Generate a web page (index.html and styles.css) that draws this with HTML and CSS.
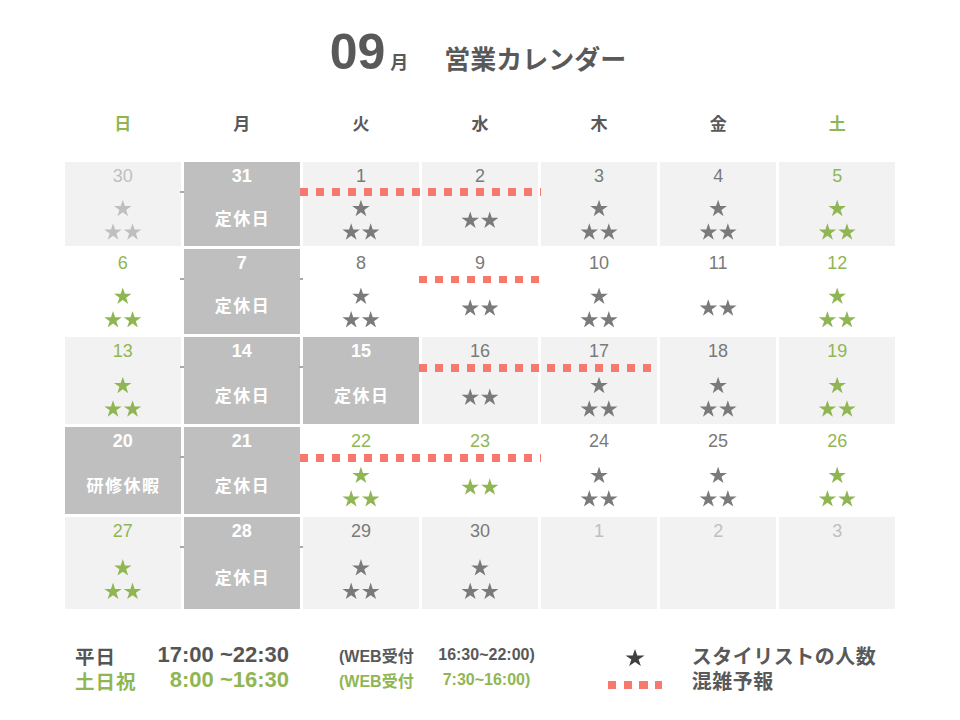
FILE: index.html
```html
<!DOCTYPE html>
<html lang="ja">
<head>
<meta charset="utf-8">
<title>09月 営業カレンダー</title>
<link rel="stylesheet" href="styles.css">
</head>
<body>
<div class="page">
  <header class="title">
    <span class="month-num">09</span><span class="month-unit">月</span><span class="title-text">営業カレンダー</span>
  </header>

  <div class="weekdays">
    <div class="wd wd-green">日</div>
    <div class="wd">月</div>
    <div class="wd">火</div>
    <div class="wd">水</div>
    <div class="wd">木</div>
    <div class="wd">金</div>
    <div class="wd wd-green">土</div>
  </div>

  <div class="calendar">
    <!-- week 1 -->
    <div class="cell shade pale"><div class="num">30</div><div class="body"><div class="line"><span class="star"></span></div><div class="line"><span class="star"></span><span class="star"></span></div></div></div>
    <div class="cell closed"><div class="num">31</div><div class="body"><div class="off">定休日</div></div></div>
    <div class="cell shade gray"><span class="crowd crowd-2"></span><div class="num">1</div><div class="body"><div class="line"><span class="star"></span></div><div class="line"><span class="star"></span><span class="star"></span></div></div></div>
    <div class="cell shade gray"><div class="num">2</div><div class="body"><div class="line"><span class="star"></span><span class="star"></span></div></div></div>
    <div class="cell shade gray"><div class="num">3</div><div class="body"><div class="line"><span class="star"></span></div><div class="line"><span class="star"></span><span class="star"></span></div></div></div>
    <div class="cell shade gray"><div class="num">4</div><div class="body"><div class="line"><span class="star"></span></div><div class="line"><span class="star"></span><span class="star"></span></div></div></div>
    <div class="cell shade green"><div class="num">5</div><div class="body"><div class="line"><span class="star"></span></div><div class="line"><span class="star"></span><span class="star"></span></div></div></div>

    <!-- week 2 -->
    <div class="cell green"><div class="num">6</div><div class="body"><div class="line"><span class="star"></span></div><div class="line"><span class="star"></span><span class="star"></span></div></div></div>
    <div class="cell closed"><div class="num">7</div><div class="body"><div class="off">定休日</div></div></div>
    <div class="cell gray"><div class="num">8</div><div class="body"><div class="line"><span class="star"></span></div><div class="line"><span class="star"></span><span class="star"></span></div></div></div>
    <div class="cell gray"><span class="crowd crowd-1"></span><div class="num">9</div><div class="body"><div class="line"><span class="star"></span><span class="star"></span></div></div></div>
    <div class="cell gray"><div class="num">10</div><div class="body"><div class="line"><span class="star"></span></div><div class="line"><span class="star"></span><span class="star"></span></div></div></div>
    <div class="cell gray"><div class="num">11</div><div class="body"><div class="line"><span class="star"></span><span class="star"></span></div></div></div>
    <div class="cell green"><div class="num">12</div><div class="body"><div class="line"><span class="star"></span></div><div class="line"><span class="star"></span><span class="star"></span></div></div></div>

    <!-- week 3 -->
    <div class="cell shade green"><div class="num">13</div><div class="body"><div class="line"><span class="star"></span></div><div class="line"><span class="star"></span><span class="star"></span></div></div></div>
    <div class="cell closed"><div class="num">14</div><div class="body"><div class="off">定休日</div></div></div>
    <div class="cell closed"><div class="num">15</div><div class="body"><div class="off">定休日</div></div></div>
    <div class="cell shade gray"><span class="crowd crowd-2s"></span><div class="num">16</div><div class="body"><div class="line"><span class="star"></span><span class="star"></span></div></div></div>
    <div class="cell shade gray"><div class="num">17</div><div class="body"><div class="line"><span class="star"></span></div><div class="line"><span class="star"></span><span class="star"></span></div></div></div>
    <div class="cell shade gray"><div class="num">18</div><div class="body"><div class="line"><span class="star"></span></div><div class="line"><span class="star"></span><span class="star"></span></div></div></div>
    <div class="cell shade green"><div class="num">19</div><div class="body"><div class="line"><span class="star"></span></div><div class="line"><span class="star"></span><span class="star"></span></div></div></div>

    <!-- week 4 -->
    <div class="cell closed first-col"><div class="num">20</div><div class="body"><div class="off">研修休暇</div></div></div>
    <div class="cell closed"><div class="num">21</div><div class="body"><div class="off">定休日</div></div></div>
    <div class="cell green"><span class="crowd crowd-2"></span><div class="num">22</div><div class="body"><div class="line"><span class="star"></span></div><div class="line"><span class="star"></span><span class="star"></span></div></div></div>
    <div class="cell green"><div class="num">23</div><div class="body"><div class="line"><span class="star"></span><span class="star"></span></div></div></div>
    <div class="cell gray"><div class="num">24</div><div class="body"><div class="line"><span class="star"></span></div><div class="line"><span class="star"></span><span class="star"></span></div></div></div>
    <div class="cell gray"><div class="num">25</div><div class="body"><div class="line"><span class="star"></span></div><div class="line"><span class="star"></span><span class="star"></span></div></div></div>
    <div class="cell green"><div class="num">26</div><div class="body"><div class="line"><span class="star"></span></div><div class="line"><span class="star"></span><span class="star"></span></div></div></div>

    <!-- week 5 -->
    <div class="cell shade green"><div class="num">27</div><div class="body"><div class="line"><span class="star"></span></div><div class="line"><span class="star"></span><span class="star"></span></div></div></div>
    <div class="cell closed"><div class="num">28</div><div class="body"><div class="off">定休日</div></div></div>
    <div class="cell shade gray"><div class="num">29</div><div class="body"><div class="line"><span class="star"></span></div><div class="line"><span class="star"></span><span class="star"></span></div></div></div>
    <div class="cell shade gray"><div class="num">30</div><div class="body"><div class="line"><span class="star"></span></div><div class="line"><span class="star"></span><span class="star"></span></div></div></div>
    <div class="cell shade pale"><div class="num">1</div><div class="body"></div></div>
    <div class="cell shade pale"><div class="num">2</div><div class="body"></div></div>
    <div class="cell shade pale"><div class="num">3</div><div class="body"></div></div>
  </div>

  <div class="legend">
    <div class="lg-label c1 r1">平日</div>
    <div class="lg-time c2 r1">17:00 ~22:30</div>
    <div class="lg-web c4 r1">(WEB受付</div>
    <div class="lg-webtime c5 r1">16:30~22:00)</div>
    <div class="lg-sym c7 r1"><span class="lg-star"></span></div>
    <div class="lg-text c9 r1">スタイリストの人数</div>

    <div class="lg-label c1 r2 lg-green">土日祝</div>
    <div class="lg-time c2 r2 lg-green">8:00 ~16:30</div>
    <div class="lg-web c4 r2 lg-green">(WEB受付</div>
    <div class="lg-webtime c5 r2 lg-green">7:30~16:00)</div>
    <div class="lg-sym c7 r2"><span class="lg-dash"></span></div>
    <div class="lg-text c9 r2">混雑予報</div>
  </div>
</div>
</body>
</html>
```

FILE: styles.css
```css
html, body {
  margin: 0;
  padding: 0;
  background: #ffffff;
}

body {
  font-family: "Liberation Sans", "Noto Sans CJK JP", sans-serif;
  color: #595959;
}

.page {
  width: 960px;
  height: 720px;
  overflow: hidden;
}

/* ---------- title ---------- */
.title {
  height: 100px;
  box-sizing: border-box;
  padding-top: 27px;
  padding-right: 4px;
  display: flex;
  justify-content: center;
  align-items: baseline;
  font-weight: 700;
  color: #595959;
}

.month-num {
  font-size: 50px;
  line-height: 51px;
}

.month-unit {
  font-size: 18px;
  margin-left: 5px;
}

.title-text {
  font-size: 26px;
  margin-left: 36px;
}

/* ---------- weekday header ---------- */
.weekdays {
  display: grid;
  grid-template-columns: repeat(7, 1fr);
  column-gap: 3.5px;
  width: 830px;
  margin-left: 65px;
  height: 44px;
  margin-bottom: 17.7px;
  align-items: center;
  text-align: center;
  font-size: 17px;
  font-weight: 700;
  color: #595959;
}

.wd-green {
  color: #90b654;
}

/* ---------- calendar grid ---------- */
.calendar {
  display: grid;
  grid-template-columns: repeat(7, 1fr);
  grid-template-rows: 84px 85px 86.7px 86.7px 91.7px;
  column-gap: 3.5px;
  row-gap: 3.3px;
  width: 830px;
  margin-left: 65px;
}

.cell {
  position: relative;
  display: flex;
  flex-direction: column;
  align-items: center;
  background: #ffffff;
}

.cell.shade {
  background: #f2f2f2;
}

.cell.closed {
  background: #bfbfbf;
  color: #ffffff;
}

.cell.closed::before,
.cell.closed::after {
  content: "";
  position: absolute;
  top: 29px;
  width: 4px;
  height: 2px;
  background: #a9a9a9;
}

.cell.closed::before {
  left: -4px;
}

.cell.closed::after {
  right: -4px;
}

.cell.closed.first-col::before {
  display: none;
}

.cell.gray {
  color: #7a7a7a;
}

.cell.green {
  color: #90b654;
}

.cell.pale {
  color: #bfbfbf;
}

.num {
  height: 28px;
  line-height: 28px;
  font-size: 18px;
}

.closed .num {
  font-weight: 700;
}

.body {
  flex: 1;
  box-sizing: border-box;
  padding-top: 4px;
  display: flex;
  flex-direction: column;
  align-items: center;
  justify-content: center;
  gap: 7px;
}

.line {
  display: flex;
  gap: 2px;
}

.star {
  display: block;
  width: 17.5px;
  height: 16.5px;
  background: currentColor;
  clip-path: polygon(50% 0, 61.8% 38.2%, 100% 38.2%, 69.1% 61.8%, 80.9% 100%, 50% 76.4%, 19.1% 100%, 30.9% 61.8%, 0 38.2%, 38.2% 38.2%);
}

.off {
  font-size: 17px;
  font-weight: 700;
  letter-spacing: 1.5px;
  margin-right: -1.5px;
  line-height: 20px;
}

/* crowd forecast dotted bar (overlay across cells) */
.crowd {
  position: absolute;
  z-index: 2;
  top: 26.8px;
  left: -3.2px;
  height: 7.6px;
  background: repeating-linear-gradient(90deg, #f7796e 0 7.8px, transparent 7.8px 16px);
}

.crowd-2 {
  width: 241px;
}

.crowd-1 {
  width: 120px;
}

.crowd-2s {
  width: 233px;
}

/* ---------- legend ---------- */
.legend {
  margin-top: 34px;
  margin-left: 75px;
  display: grid;
  grid-template-columns: 75px 139px 50px 99px 97px 73px 54px 29.7px auto;
  grid-template-rows: 25px 25px;
  align-items: center;
  font-weight: 700;
  color: #555555;
}

.c1 { grid-column: 1; }
.c2 { grid-column: 2; }
.c4 { grid-column: 4; }
.c5 { grid-column: 5; }
.c7 { grid-column: 7; }
.c9 { grid-column: 9; }
.r1 { grid-row: 1; }
.r2 { grid-row: 2; }

.lg-label {
  font-size: 19.5px;
  letter-spacing: 1px;
  white-space: nowrap;
}

.lg-time {
  font-size: 22px;
  text-align: right;
  white-space: nowrap;
}

.lg-web {
  font-size: 16px;
  white-space: nowrap;
  color: #595959;
}

.lg-webtime {
  font-size: 16px;
  text-align: center;
  white-space: nowrap;
  color: #595959;
}

.lg-green,
.lg-web.lg-green,
.lg-webtime.lg-green {
  color: #90b654;
}

.lg-sym {
  display: flex;
  justify-content: center;
}

.lg-star {
  display: block;
  width: 19px;
  height: 17px;
  margin-top: 4px;
  background: #404040;
  clip-path: polygon(50% 0, 61.8% 38.2%, 100% 38.2%, 69.1% 61.8%, 80.9% 100%, 50% 76.4%, 19.1% 100%, 30.9% 61.8%, 0 38.2%, 38.2% 38.2%);
}

.lg-dash {
  display: block;
  width: 54px;
  height: 8px;
  margin-top: 9px;
  background: repeating-linear-gradient(90deg, #f7796e 0 8.3px, transparent 8.3px 15.7px);
}

.lg-text {
  font-size: 20px;
  letter-spacing: 0.5px;
  white-space: nowrap;
  color: #595959;
}
```
